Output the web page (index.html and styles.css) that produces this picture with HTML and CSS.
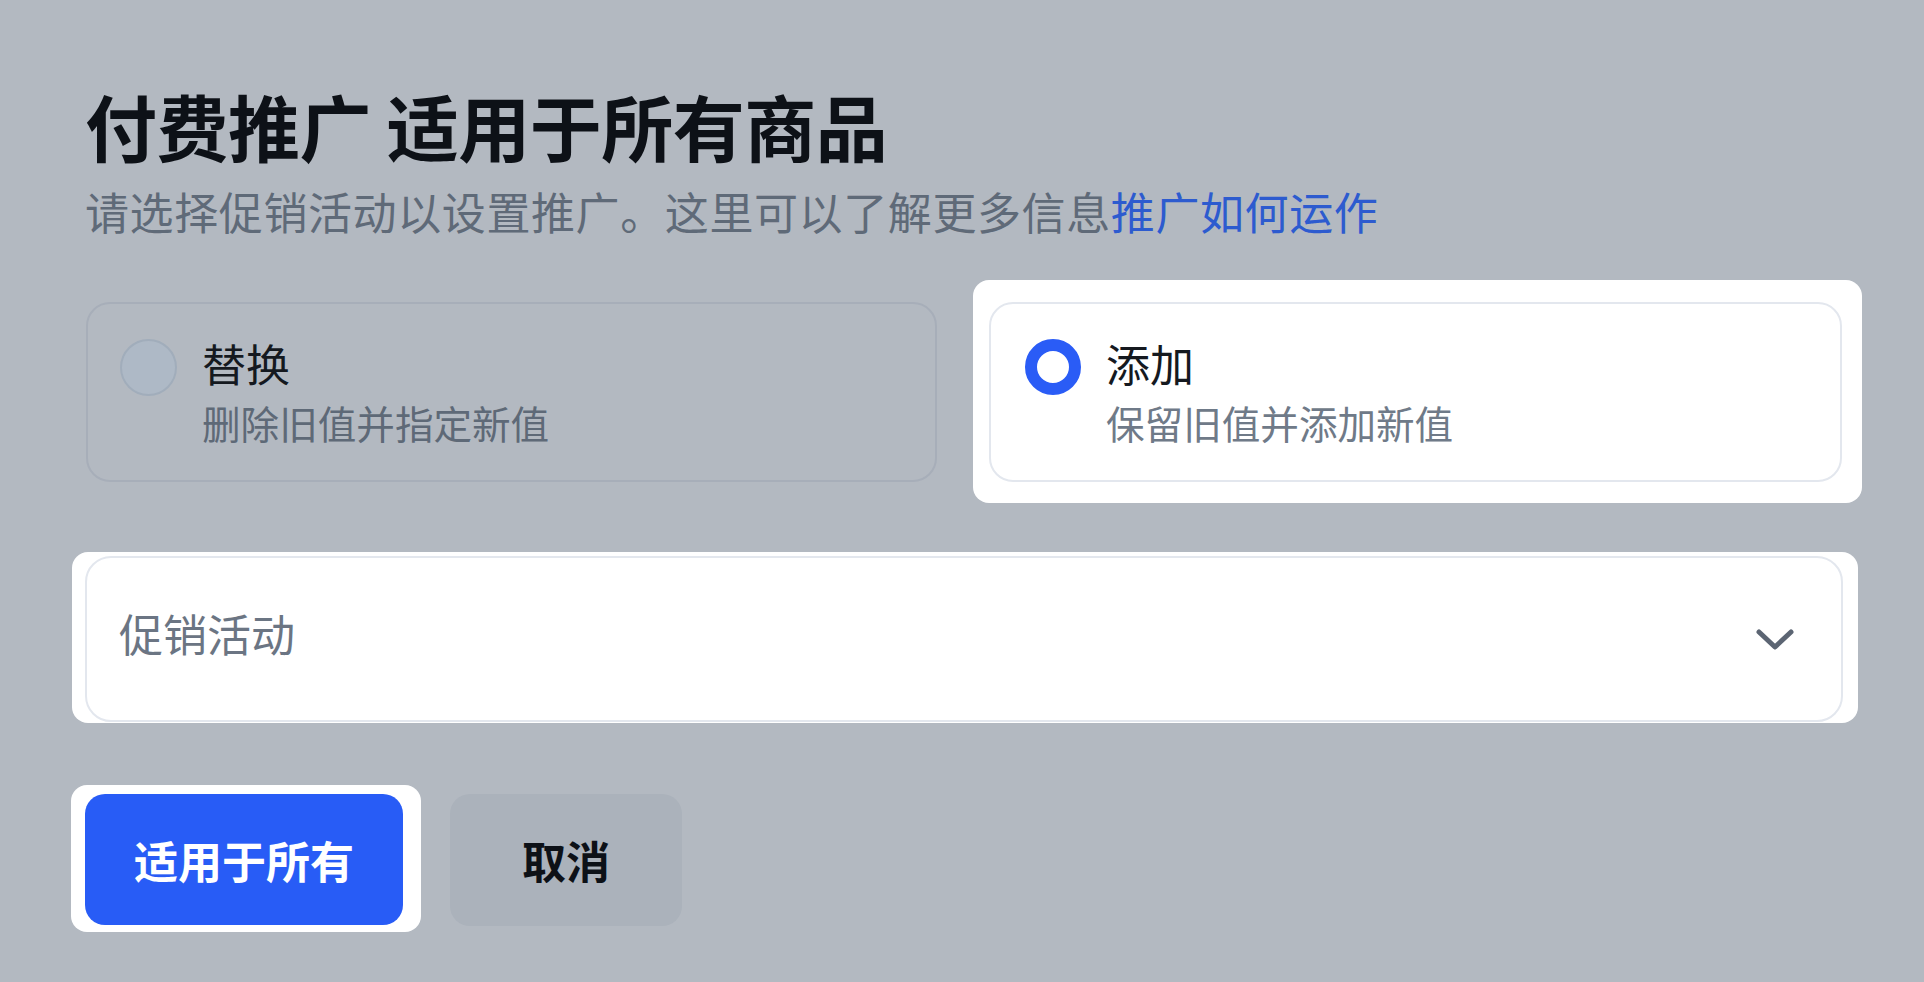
FILE: index.html
```html
<!DOCTYPE html>
<html lang="zh-CN">
<head>
<meta charset="utf-8">
<title>付费推广</title>
<link rel="stylesheet" href="styles.css">
</head>
<body>
<main class="page">
  <h1 class="title">付费推广 适用于所有商品</h1>
  <p class="subtitle">请选择促销活动以设置推广。这里可以了解更多信息<a class="link" href="#">推广如何运作</a></p>

  <div class="options">
    <div class="card card-dim">
      <span class="radio radio-off"></span>
      <div class="card-text">
        <div class="card-title">替换</div>
        <div class="card-desc">删除旧值并指定新值</div>
      </div>
    </div>
    <div class="spot spot-card">
      <div class="card card-lit">
        <span class="radio radio-on"></span>
        <div class="card-text">
          <div class="card-title">添加</div>
          <div class="card-desc card-desc-lit">保留旧值并添加新值</div>
        </div>
      </div>
    </div>
  </div>

  <div class="spot spot-select">
    <div class="select">
      <span class="placeholder">促销活动</span>
      <svg class="chevron" width="40" height="26" viewBox="0 0 40 26" aria-hidden="true">
        <polyline points="4,5 20,20 36,5" fill="none" stroke="#5c6573" stroke-width="5" stroke-linecap="round" stroke-linejoin="round"/>
      </svg>
    </div>
  </div>

  <div class="actions">
    <div class="spot spot-btn">
      <button class="btn btn-primary" type="button">适用于所有</button>
    </div>
    <button class="btn btn-cancel" type="button">取消</button>
  </div>
</main>
</body>
</html>
```

FILE: styles.css
```css
html, body {
  margin: 0;
  padding: 0;
}

html {
  height: 982px;
  overflow: hidden;
  background: #b3b9c1;
}

body {
  background: #b3b9c1;
  font-family: "Noto Sans CJK SC", "Noto Sans", sans-serif;
  width: 1924px;
  height: 982px;
  overflow: hidden;
}

.page {
  padding: 82px 81px 0 85px;
  display: flex;
  flex-direction: column;
}

.title {
  margin: 0;
  font-size: 72px;
  line-height: 86px;
  font-weight: 700;
  color: #0d1117;
  letter-spacing: -0.5px;
}

.subtitle {
  margin: 13px 0 0 0;
  font-size: 44px;
  line-height: 60px;
  color: #5f6a78;
  letter-spacing: 0.6px;
}

.link {
  color: #2d5bcf;
  text-decoration: none;
}

.options {
  margin-top: 61px;
  display: grid;
  grid-template-columns: 851px 853px;
  column-gap: 52px;
  margin-left: 1px;
}

.spot {
  background: #ffffff;
}

.spot-card {
  margin: -22px -20px -21px -16px;
  padding: 22px 20px 21px 16px;
  border-radius: 16px;
}

.card {
  box-sizing: border-box;
  height: 180px;
  border-radius: 24px;
  border: 2px solid;
  padding: 31px 32px 0 32px;
  display: flex;
  align-items: flex-start;
  gap: 25px;
}

.card-dim {
  border-color: #a7aeb9;
  background: #b3b9c1;
}

.card-lit {
  border-color: #e3e7ee;
  background: #ffffff;
}

.radio {
  box-sizing: border-box;
  flex: 0 0 auto;
  width: 57px;
  height: 57px;
  border-radius: 50%;
  margin-top: 4px;
}

.radio-off {
  background: #aeb9c6;
  border: 2px solid #a1adbb;
}

.radio-on {
  width: 56px;
  height: 56px;
  background: #ffffff;
  border: 12px solid #2a5cf6;
  margin-left: 2px;
}

.card-text {
  display: flex;
  flex-direction: column;
}

.card-title {
  font-size: 44px;
  line-height: 56px;
  color: #15191f;
}

.card-desc {
  margin-top: 6px;
  font-size: 38.6px;
  line-height: 50px;
  color: #5e6977;
}

.card-desc-lit {
  color: #6f7a88;
}

.spot-select {
  margin: 70px -15px 0 -13px;
  padding: 4px 15px 1px 13px;
  border-radius: 16px;
}

.select {
  box-sizing: border-box;
  height: 166px;
  border: 2px solid #e3e7ee;
  border-radius: 26px;
  background: #ffffff;
  padding: 0 46px 0 32px;
  display: flex;
  align-items: center;
  justify-content: space-between;
}

.placeholder {
  font-size: 44px;
  line-height: 56px;
  color: #6b7583;
  margin-top: -12px;
}

.chevron {
  display: block;
  margin-top: 2px;
}

.actions {
  margin-top: 71px;
  display: flex;
  align-items: flex-start;
  gap: 47px;
}

.spot-btn {
  margin: -9px -18px -7px -14px;
  padding: 9px 18px 7px 14px;
  border-radius: 16px;
  display: flex;
}

.btn {
  font-family: "Noto Sans CJK SC", "Noto Sans", sans-serif;
  font-size: 44px;
  font-weight: 700;
  border: none;
  border-radius: 20px;
  height: 131px;
  padding: 0;
  cursor: pointer;
}

.btn-primary {
  width: 318px;
  background: #285cf6;
  color: #ffffff;
}

.btn-cancel {
  width: 232px;
  height: 132px;
  background: #abb2bb;
  color: #0d1117;
}
```
